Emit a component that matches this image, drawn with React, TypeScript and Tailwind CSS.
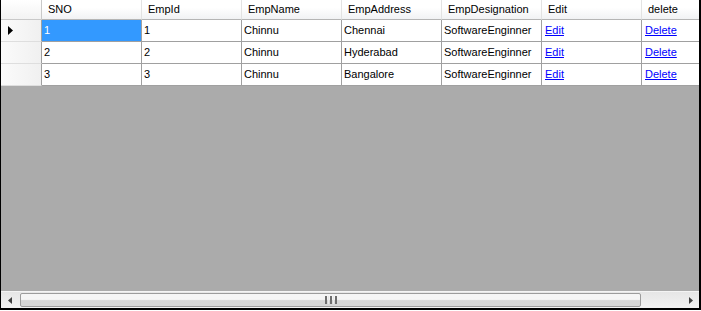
import React from "react";

const columns = ["SNO", "EmpId", "EmpName", "EmpAddress", "EmpDesignation", "Edit", "delete"];

const rows = [
  ["1", "1", "Chinnu", "Chennai", "SoftwareEnginner"],
  ["2", "2", "Chinnu", "Hyderabad", "SoftwareEnginner"],
  ["3", "3", "Chinnu", "Bangalore", "SoftwareEnginner"],
];

function Arrow({ dir }: { dir: "left" | "right" }) {
  return (
    <svg width="4" height="7" viewBox="0 0 4 7">
      {dir === "left" ? (
        <path d="M4 0 L0 3.5 L4 7 Z" fill="#404040" />
      ) : (
        <path d="M0 0 L4 3.5 L0 7 Z" fill="#404040" />
      )}
    </svg>
  );
}

export default function App() {
  return (
    <div className="h-[311px] w-[701px] bg-white font-['Liberation_Sans',Arial,sans-serif] text-[11px] text-black">
      <div className="flex h-[310px] flex-col overflow-hidden border-b-2 border-l border-r-2 border-black bg-[#ababab]">
        {/* header */}
        <div className="flex h-[20px] shrink-0">
          <div className="h-full w-[41px] shrink-0 border-b border-r border-[#c9c9c9] bg-linear-to-b from-white to-[#f3f3f3]" />
          {columns.map((c) => (
            <div
              key={c}
              className="flex h-full w-[100px] shrink-0 items-center border-b border-r border-b-[#b5b5b5] border-r-[#e3e3e3] bg-linear-to-b from-white from-40% to-[#f1f2f4] pl-[6px]"
            >
              {c}
            </div>
          ))}
        </div>

        {/* rows */}
        {rows.map((r, i) => (
          <div key={i} className="flex h-[22px] shrink-0">
            <div className="flex h-full w-[41px] shrink-0 items-center border-b border-r border-b-[#dedede] border-r-[#a0a0a0] bg-linear-to-r from-[#fbfbfb] to-[#f0f0f0] pl-[7px]">
              {i === 0 && (
                <svg width="5" height="9" viewBox="0 0 5 9">
                  <path d="M0 0 L5 4.5 L0 9 Z" fill="#000" />
                </svg>
              )}
            </div>
            {r.map((v, j) => (
              <div
                key={j}
                className={`flex h-full w-[100px] shrink-0 items-center border-b border-r border-[#a0a0a0] pl-[2px] ${
                  i === 0 && j === 0 ? "bg-[#3399ff] text-white" : "bg-white"
                }`}
              >
                {v}
              </div>
            ))}
            <div className="flex h-full w-[100px] shrink-0 items-center border-b border-r border-[#a0a0a0] bg-white pl-[3px]">
              <span className="text-[#0000ff] underline">Edit</span>
            </div>
            <div className="flex h-full w-[100px] shrink-0 items-center border-b border-r border-[#a0a0a0] bg-white pl-[3px]">
              <span className="text-[#0000ff] underline">Delete</span>
            </div>
          </div>
        ))}

        <div className="flex-1" />

        {/* horizontal scrollbar */}
        <div className="flex h-[17px] shrink-0 border-t border-[#f4f4f4] bg-linear-to-b from-[#e6e6e6] to-[#f2f2f2]">
          <div className="flex h-full w-[17px] shrink-0 items-center justify-center">
            <Arrow dir="left" />
          </div>
          <div className="flex flex-1 items-center">
            <div className="ml-[2px] flex h-[14px] w-[621px] items-center justify-center rounded-[2px] border border-[#9c9c9c] bg-linear-to-b from-[#f5f5f5] from-45% to-[#d6d6d6] to-55%">
              <div className="flex h-[8px] gap-[1px]">
                <span className="h-full w-[2px] bg-[#6e6e6e]" />
                <span className="h-full w-[1px] bg-[#e8e8e8]" />
                <span className="h-full w-[2px] bg-[#6e6e6e]" />
                <span className="h-full w-[1px] bg-[#e8e8e8]" />
                <span className="h-full w-[2px] bg-[#6e6e6e]" />
              </div>
            </div>
          </div>
          <div className="flex h-full w-[17px] shrink-0 items-center justify-center">
            <Arrow dir="right" />
          </div>
        </div>
      </div>
    </div>
  );
}
